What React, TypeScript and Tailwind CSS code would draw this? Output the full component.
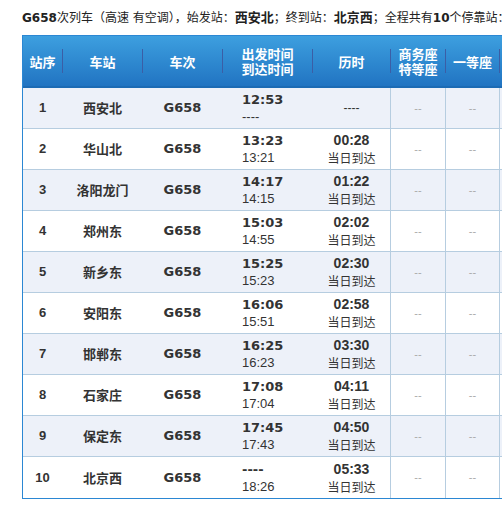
import React from "react";

type Stop = {
  no: number;
  name: string;
  dep: string;
  arr: string;
  dur: string;
  note: string;
};

const stops: Stop[] = [
  { no: 1, name: "西安北", dep: "12:53", arr: "----", dur: "----", note: "" },
  { no: 2, name: "华山北", dep: "13:23", arr: "13:21", dur: "00:28", note: "当日到达" },
  { no: 3, name: "洛阳龙门", dep: "14:17", arr: "14:15", dur: "01:22", note: "当日到达" },
  { no: 4, name: "郑州东", dep: "15:03", arr: "14:55", dur: "02:02", note: "当日到达" },
  { no: 5, name: "新乡东", dep: "15:25", arr: "15:23", dur: "02:30", note: "当日到达" },
  { no: 6, name: "安阳东", dep: "16:06", arr: "15:51", dur: "02:58", note: "当日到达" },
  { no: 7, name: "邯郸东", dep: "16:25", arr: "16:23", dur: "03:30", note: "当日到达" },
  { no: 8, name: "石家庄", dep: "17:08", arr: "17:04", dur: "04:11", note: "当日到达" },
  { no: 9, name: "保定东", dep: "17:45", arr: "17:43", dur: "04:50", note: "当日到达" },
  { no: 10, name: "北京西", dep: "----", arr: "18:26", dur: "05:33", note: "当日到达" },
];

function HeadSep() {
  return <span className="h-[24px] w-px shrink-0 bg-[#3b5ea6]" />;
}

function BodySep({ line }: { line?: boolean }) {
  return <span className={line ? "w-px shrink-0 self-stretch bg-[#b6cde0]" : "w-px shrink-0 self-stretch"} />;
}

export default function App() {
  return (
    <div className="w-[502px] h-[526px] overflow-hidden bg-white text-[#333] font-['Liberation_Sans','Noto_Sans_CJK_SC',sans-serif]">
      <p className="pl-[22px] pt-[9px] h-[35px] whitespace-nowrap text-[12px] leading-[18px] text-[#222] font-['DejaVu_Sans','Noto_Sans_CJK_SC',sans-serif]">
        <b>G658</b>次列车（高速 有空调），始发站：<b className="text-[13px]">西安北</b>；终到站：<b className="text-[13px]">北京西</b>；全程共有<b>10</b>个停靠站：
      </p>

      <div className="ml-[22px] w-[620px] border-l border-t border-b border-[#2b87d3]">
        <div className="flex h-[52px] items-center border-b-2 border-[#1c6bb4] bg-gradient-to-b from-[#3d9fdf] to-[#2174c2] text-[13px] font-bold leading-[15px] text-white font-['Noto_Sans_CJK_SC',sans-serif]">
          <div className="w-[39px] text-center">站序</div>
          <HeadSep />
          <div className="w-[79px] text-center">车站</div>
          <HeadSep />
          <div className="w-[79px] text-center">车次</div>
          <HeadSep />
          <div className="w-[89px] text-center">
            出发时间
            <br />
            到达时间
          </div>
          <HeadSep />
          <div className="w-[77px] text-center">历时</div>
          <HeadSep />
          <div className="w-[54px] text-center">
            商务座
            <br />
            特等座
          </div>
          <HeadSep />
          <div className="w-[53px] text-center">一等座</div>
          <HeadSep />
          <div className="w-[60px] text-center">二等座</div>
        </div>

        {stops.map((s, i) => (
          <div
            key={s.no}
            className={
              "flex h-[41px] items-center " +
              (i % 2 === 0 ? "bg-[#edf1f9] " : "bg-white ") +
              (i < stops.length - 1 ? "border-b border-[#b6cde0]" : "")
            }
          >
            <div className="w-[39px] text-center text-[13px] font-bold">{s.no}</div>
            <BodySep />
            <div className="w-[79px] text-center text-[13px] font-bold font-['Noto_Sans_CJK_SC',sans-serif]">{s.name}</div>
            <BodySep />
            <div className="w-[79px] text-center text-[13px] font-bold font-['DejaVu_Sans',sans-serif]">G658</div>
            <BodySep />
            <div className="w-[89px] pl-[19px] leading-[17px]">
              <div className="text-[13px] font-bold font-['DejaVu_Sans',sans-serif]">{s.dep}</div>
              <div className="text-[13px]">{s.arr}</div>
            </div>
            <BodySep />
            <div className="w-[77px] text-center leading-[18px]">
              {s.note ? (
                <>
                  <div className="text-[14px] font-bold">{s.dur}</div>
                  <div className="text-[12px] font-['Noto_Sans_CJK_SC',sans-serif]">{s.note}</div>
                </>
              ) : (
                <div className="text-[12px]">{s.dur}</div>
              )}
            </div>
            <BodySep line />
            <div className="w-[54px] text-center text-[11px] text-[#aaa]">--</div>
            <BodySep line />
            <div className="w-[53px] text-center text-[11px] text-[#aaa]">--</div>
            <BodySep line />
            <div className="w-[60px] text-center text-[11px] text-[#aaa]">--</div>
          </div>
        ))}
      </div>
    </div>
  );
}
